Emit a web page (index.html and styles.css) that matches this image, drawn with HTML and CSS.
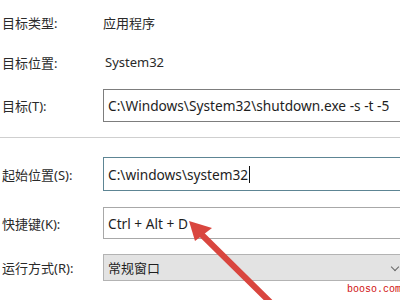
FILE: index.html
```html
<!DOCTYPE html>
<html lang="zh-CN">
<head>
<meta charset="utf-8">
<link rel="stylesheet" href="styles.css">
</head>
<body>
<div class="panel">
  <div class="row r1"><span class="label">目标类型:</span><span class="value">应用程序</span></div>
  <div class="row r2"><span class="label">目标位置:</span><span class="value v2">System32</span></div>
  <div class="row r3"><span class="label">目标(<u>T</u>):</span><div class="field f-target">C:\Windows\System32\shutdown.exe -s -t -5</div></div>
  <div class="sep"></div>
  <div class="row r4"><span class="label">起始位置(<u>S</u>):</span><div class="field f-start">C:\windows\system32<span class="caret"></span></div></div>
  <div class="row r5"><span class="label">快捷键(<u>K</u>):</span><div class="field f-key">Ctrl + Alt + D</div></div>
  <div class="row r6"><span class="label">运行方式(<u>R</u>):</span><div class="field f-select">常规窗口<span class="chev"></span></div></div>
</div>
<svg class="arrow" width="400" height="300" viewBox="0 0 400 300">
  <line x1="270" y1="302" x2="199" y2="232" stroke="#d9463f" stroke-width="6" stroke-linecap="round"/>
  <polygon points="189,221 212,228 195,241" fill="#d9463f"/>
</svg>
<div class="mark">booso.com</div>
</body>
</html>
```
FILE: styles.css
```css
html, body {
  margin: 0;
  padding: 0;
  width: 400px;
  height: 300px;
  overflow: hidden;
  background: #ffffff;
}
body {
  position: relative;
  font-family: "Noto Sans", "Noto Sans CJK SC", sans-serif;
  font-size: 13px;
  color: #222;
}
.panel {
  display: flex;
  flex-direction: column;
}
.row {
  display: flex;
  align-items: center;
}
.label {
  width: 101px;
  padding-left: 2px;
  flex: none;
  color: #2a2a2a;
}
.label u {
  text-decoration: none;
}
.value {
  color: #2a2a2a;
}
.v2 {
  padding-left: 2px;
}
.r1 { margin-top: 10px; height: 24px; }
.r2 { margin-top: 16px; height: 24px; }
.r3 { margin-top: 15px; height: 33px; }
.sep {
  margin-top: 15px;
  height: 1px;
  background: #cfcfcf;
}
.r4 { margin-top: 19px; height: 34px; }
.r5 { margin-top: 16px; height: 32px; }
.r6 { margin-top: 15px; height: 27px; }
.field {
  flex: 1;
  align-self: stretch;
  margin-right: -6px;
  border: 1px solid #7d7d7d;
  display: flex;
  align-items: center;
  padding-left: 4px;
  white-space: nowrap;
  color: #1e1e1e;
  background: #fff;
  font-size: 13.7px;
}
.f-start {
  border-color: #5d8594;
}
.f-key {
  border-color: #a8a8a8;
}
.caret {
  display: inline-block;
  width: 1px;
  height: 17px;
  background: #111;
  margin-left: 1px;
}
.f-select {
  background: #e3e3e3;
  border-color: #b3b3b3;
  position: relative;
  font-size: 13px;
}
.chev {
  position: absolute;
  right: 7px;
  top: 9px;
  width: 5px;
  height: 5px;
  border-right: 1px solid #666;
  border-bottom: 1px solid #666;
  transform: rotate(45deg);
}
.arrow {
  position: absolute;
  left: 0;
  top: 0;
}
.mark {
  position: absolute;
  left: 347px;
  top: 284px;
  font-family: "Liberation Mono", monospace;
  font-size: 10px;
  color: #d01010;
  letter-spacing: 0;
}
```
